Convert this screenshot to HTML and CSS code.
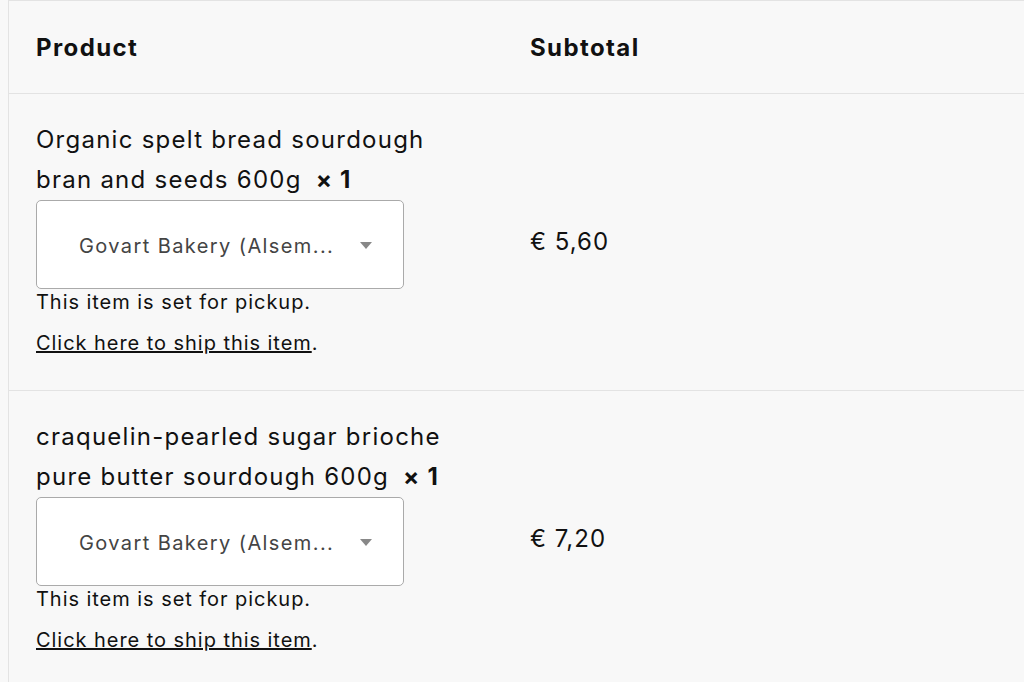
FILE: index.html
```html
<!DOCTYPE html>
<html lang="en">
<head>
  <meta charset="UTF-8" />
  <title>Checkout</title>
  <link rel="stylesheet" href="styles.css">
</head>
<body>
  <table class="order-table">
    <thead>
      <tr>
        <th class="product-name">Product</th>
        <th class="product-total">Subtotal</th>
      </tr>
    </thead>
    <tbody>
      <tr class="cart-item">
        <td class="product-name">
          <div class="item-title">Organic spelt bread sourdough bran and seeds 600g <strong class="product-quantity">×&nbsp;1</strong></div>
          <div class="pickup-select">
            <span class="pickup-value">Govart Bakery (Alsem...</span>
            <svg class="pickup-arrow" width="12" height="7" viewBox="0 0 12 7"><path d="M0 0h12L6 7z" fill="#888"/></svg>
          </div>
          <p class="pickup-note">This item is set for pickup.</p>
          <p class="pickup-note"><a href="#">Click here to ship this item</a>.</p>
        </td>
        <td class="product-total">€ 5,60</td>
      </tr>
      <tr class="cart-item">
        <td class="product-name">
          <div class="item-title">craquelin-pearled sugar brioche pure butter sourdough 600g <strong class="product-quantity">×&nbsp;1</strong></div>
          <div class="pickup-select">
            <span class="pickup-value">Govart Bakery (Alsem...</span>
            <svg class="pickup-arrow" width="12" height="7" viewBox="0 0 12 7"><path d="M0 0h12L6 7z" fill="#888"/></svg>
          </div>
          <p class="pickup-note">This item is set for pickup.</p>
          <p class="pickup-note"><a href="#">Click here to ship this item</a>.</p>
        </td>
        <td class="product-total">€ 7,20</td>
      </tr>
    </tbody>
  </table>
</body>
</html>
```

FILE: styles.css
```css
body {
  margin: 0;
  background-color: #f8f8f8;
  font-family: Inter, "Noto Sans", Arial, sans-serif;
  color: #111;
}

.order-table {
  margin-left: 8px;
  width: calc(100% - 8px);
  border-collapse: collapse;
  border-left: 1px solid #e3e3e3;
  border-top: 1px solid #e3e3e3;
}

.order-table th {
  height: 92px;
  padding: 0 27px;
  text-align: left;
  font-size: 24px;
  font-weight: 700;
  letter-spacing: 1.4px;
  border-bottom: 1px solid #e3e3e3;
}

.order-table th.product-name {
  width: 440px;
}

.order-table td {
  padding: 26px 27px 33px;
  border-bottom: 1px solid #e3e3e3;
  vertical-align: middle;
}

.order-table td.product-name {
  vertical-align: top;
}

.order-table td.product-total {
  padding-top: 29px;
  padding-bottom: 30px;
}

.product-total {
  font-size: 24px;
  letter-spacing: 1px;
}

.item-title {
  width: 430px;
  font-size: 24px;
  line-height: 40px;
  letter-spacing: 1.25px;
}

.product-quantity {
  display: inline-block;
  margin-left: 6px;
  font-weight: 700;
}

.pickup-select {
  display: flex;
  align-items: center;
  box-sizing: border-box;
  width: 368px;
  height: 89px;
  padding: 0 31px 0 42px;
  background-color: white;
  border: 1px solid #aaa;
  border-radius: 5px;
}

.pickup-value {
  padding-top: 3px;
  font-size: 20px;
  letter-spacing: 1.4px;
  color: #444;
}

.pickup-arrow {
  margin-left: auto;
  margin-top: 1px;
}

.pickup-note {
  margin: 0 0 14px;
  font-size: 20px;
  line-height: 27px;
  letter-spacing: 0.95px;
}

.pickup-note:last-child {
  margin-bottom: 0;
}

.pickup-note a {
  color: #111;
  text-decoration: underline;
}
```
